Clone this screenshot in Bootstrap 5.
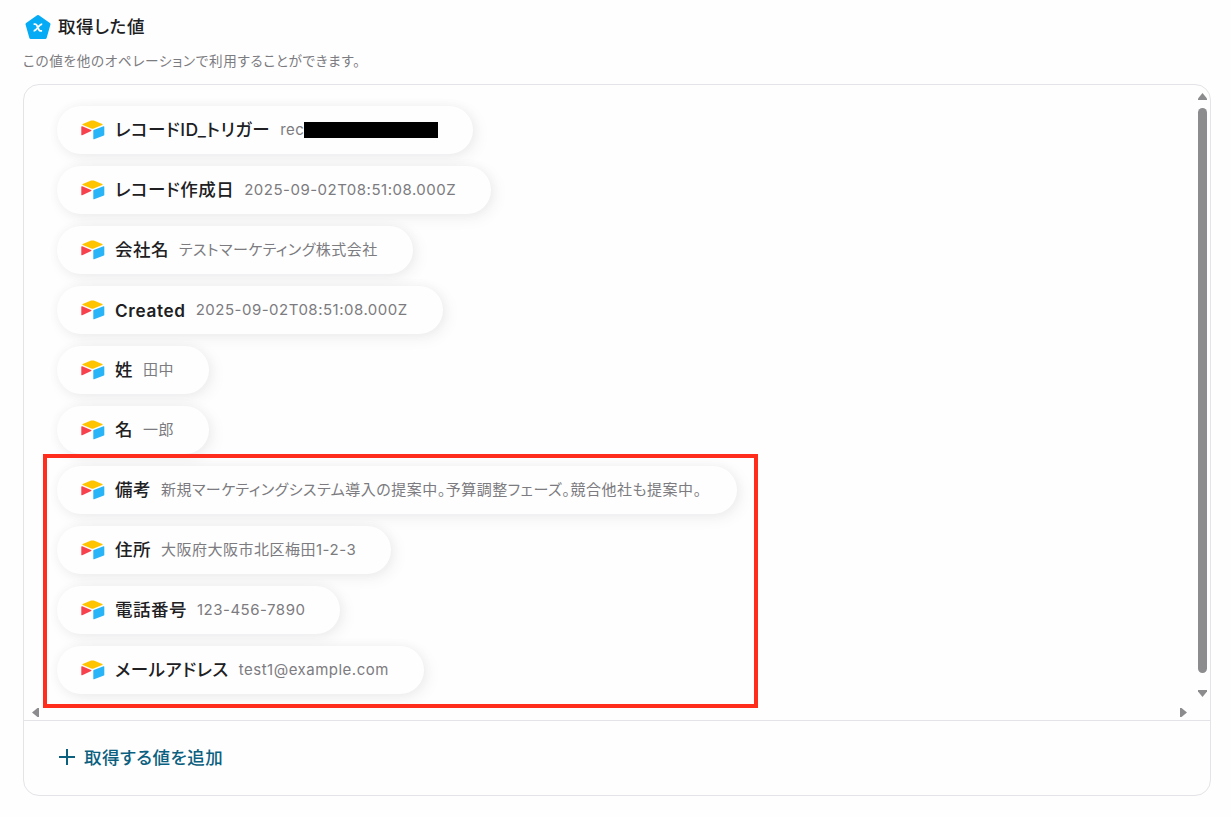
<!DOCTYPE html>
<html lang="ja">
<head>
    <meta charset="utf-8">
    <meta name="viewport" content="width=device-width, initial-scale=1">
    <title>取得した値</title>
    <link href="https://cdn.jsdelivr.net/npm/bootstrap@5.3.0/dist/css/bootstrap.min.css" rel="stylesheet">
    <style>
        body {
            font-family: Inter, "Noto Sans CJK JP", sans-serif;
            font-feature-settings: "palt";
            background: #fefefe;
            color: #202023;
            height: 817px;
            overflow: hidden;
        }
        .page { padding: 14px 20px 0 23px; }
        .page-title { font-size: 17.5px; font-weight: 500; letter-spacing: .6px; line-height: 26px; margin-left: 5px; }
        .page-note { font-size: 13.6px; letter-spacing: .68px; line-height: 20px; color: #7c7b80; margin-top: 11px; }
        .panel { height: 712px; margin-top: 13px; border: 1px solid #e4e3e7; border-radius: 16px; overflow: hidden; }
        .scroll-area { height: 636px; border-bottom: 1px solid #e4e3e7; position: relative; }
        .value-list { gap: 12px; padding: 21px 0 0 33px; }
        .pill {
            height: 48px;
            padding: 1px 35px 0 24px;
            border-radius: 24px;
            background: #fefefe;
            box-shadow: 4px 4px 16px rgba(40, 20, 50, .06), 0 0 12px rgba(40, 20, 50, .04);
            white-space: nowrap;
        }
        .pill svg { margin: -1px 10px 0 0; }
        .pill-label { font-size: 17.5px; font-weight: 500; letter-spacing: .5px; margin-right: 10px; }
        .pill-label.latin { font-size: 17.2px; font-weight: 600; letter-spacing: .65px; }
        .pill-value { font-size: 15px; letter-spacing: .5px; color: #7c7b80; }
        .mask { width: 134px; height: 16px; margin-top: -2px; background: #000; }
        .marker { position: absolute; left: 19px; top: 369px; width: 715px; height: 254px; border: 4px solid #ff2d1c; }
        .bar-v { position: absolute; right: 3px; top: 8px; width: 9px; height: 604px; }
        .bar-thumb { width: 9px; height: 565px; border-radius: 5px; background: #8c8b8e; }
        .arrow-left { position: absolute; left: 8px; bottom: 3px; }
        .arrow-right { position: absolute; right: 23px; bottom: 3px; }
        .add-row { height: 74px; padding-left: 35px; gap: 9px; color: #0b6080; font-size: 17.5px; font-weight: 500; letter-spacing: .5px; }
        .add-row svg { margin-top: -2px; }
    </style>
</head>
<body>
    <svg width="0" height="0" class="position-absolute">
        <symbol id="base-icon" viewBox="0 0 24 20">
            <path fill="#ffc400" d="M10.2.6 1.7 4.1c-.5.2-.5.8 0 1l8.6 3.4c.8.3 1.6.3 2.4 0l8.6-3.4c.5-.2.5-.8 0-1L12.8.6c-.8-.3-1.8-.3-2.6 0z"/>
            <path fill="#29b4f8" d="M12.300 10.400v8.300c0 .4.4.7.8.5l9.800-3.700c.2-.1.4-.3.4-.5V6.700c0-.4-.4-.7-.8-.5L12.700 9.900c-.2.1-.4.3-.4.5z"/>
            <path fill="#f7414d" d="M10.200 10.900 1.200 15.200c-.4.2-.9 0-.9-.5V6.800c0-.5.5-.7.9-.5l8.900 3.600c.5.3.5.8.1 1z"/>
        </symbol>
    </svg>

    <div class="page">
        <div class="d-flex align-items-center">
            <svg width="30" height="26" viewBox="0 0 30 26">
                <path d="M15 2.500 26 10.200 22.200 23.500H7.800L4 10.200z" fill="#05abf5" stroke="#05abf5" stroke-width="3" stroke-linejoin="round"/>
                <path d="M10.600 10.200h1.600c.8 0 1.200.4 1.600 1.100l2.100 4.400c.4.700.8 1.100 1.600 1.100h1.600M19.200 10.200c-1.600 0-2.600 1-4.300 3.300s-2.700 3.300-4.300 3.300" fill="none" stroke="#fff" stroke-width="1.800"/>
            </svg>
            <div class="page-title">取得した値</div>
        </div>
        <div class="page-note">この値を他のオペレーションで利用することができます。</div>

        <div class="panel">
            <div class="scroll-area">
                <div class="value-list d-flex flex-column align-items-start" id="valueList"></div>
                <div class="bar-v d-flex flex-column align-items-center">
                    <svg width="9" height="7"><path d="M4.500 0 9 5.500V7H0V5.500z" fill="#8c8b8e"/></svg>
                    <div class="bar-thumb mt-2"></div>
                    <svg width="9" height="7" class="mt-auto"><path d="M4.500 7 9 1.500V0H0v1.500z" fill="#8c8b8e"/></svg>
                </div>
                <svg width="7" height="9" class="arrow-left"><path d="M0 4.500 5.500 0H7v9H5.500z" fill="#8c8b8e"/></svg>
                <svg width="7" height="9" class="arrow-right"><path d="M7 4.500 1.500 0H0v9h1.500z" fill="#8c8b8e"/></svg>
                <div class="marker"></div>
            </div>
            <div class="add-row d-flex align-items-center">
                <svg width="16" height="16"><path d="M8 0v16M0 8h16" stroke="#0b6080" stroke-width="2"/></svg>
                <span>取得する値を追加</span>
            </div>
        </div>
    </div>

    <script src="https://cdn.jsdelivr.net/npm/bootstrap@5.3.0/dist/js/bootstrap.bundle.min.js"></script>
    <script>
        const items = [
            { label: "レコードID_トリガー", value: "rec", masked: true },
            { label: "レコード作成日", value: "2025-09-02T08:51:08.000Z" },
            { label: "会社名", value: "テストマーケティング株式会社" },
            { label: "Created", value: "2025-09-02T08:51:08.000Z", latin: true },
            { label: "姓", value: "田中" },
            { label: "名", value: "一郎" },
            { label: "備考", value: "新規マーケティングシステム導入の提案中。予算調整フェーズ。競合他社も提案中。" },
            { label: "住所", value: "大阪府大阪市北区梅田1-2-3" },
            { label: "電話番号", value: "123-456-7890" },
            { label: "メールアドレス", value: "test1@example.com" }
        ];

        let html = "";
        items.forEach(item => {
            html += `
                <div class="pill d-flex align-items-center">
                    <svg width="24" height="20"><use href="#base-icon"/></svg>
                    <span class="pill-label${item.latin ? " latin" : ""}">${item.label}</span>
                    <span class="pill-value">${item.value}</span>
                    ${item.masked ? '<span class="mask"></span>' : ""}
                </div>
            `;
        });
        document.getElementById("valueList").innerHTML = html;
    </script>
</body>
</html>
